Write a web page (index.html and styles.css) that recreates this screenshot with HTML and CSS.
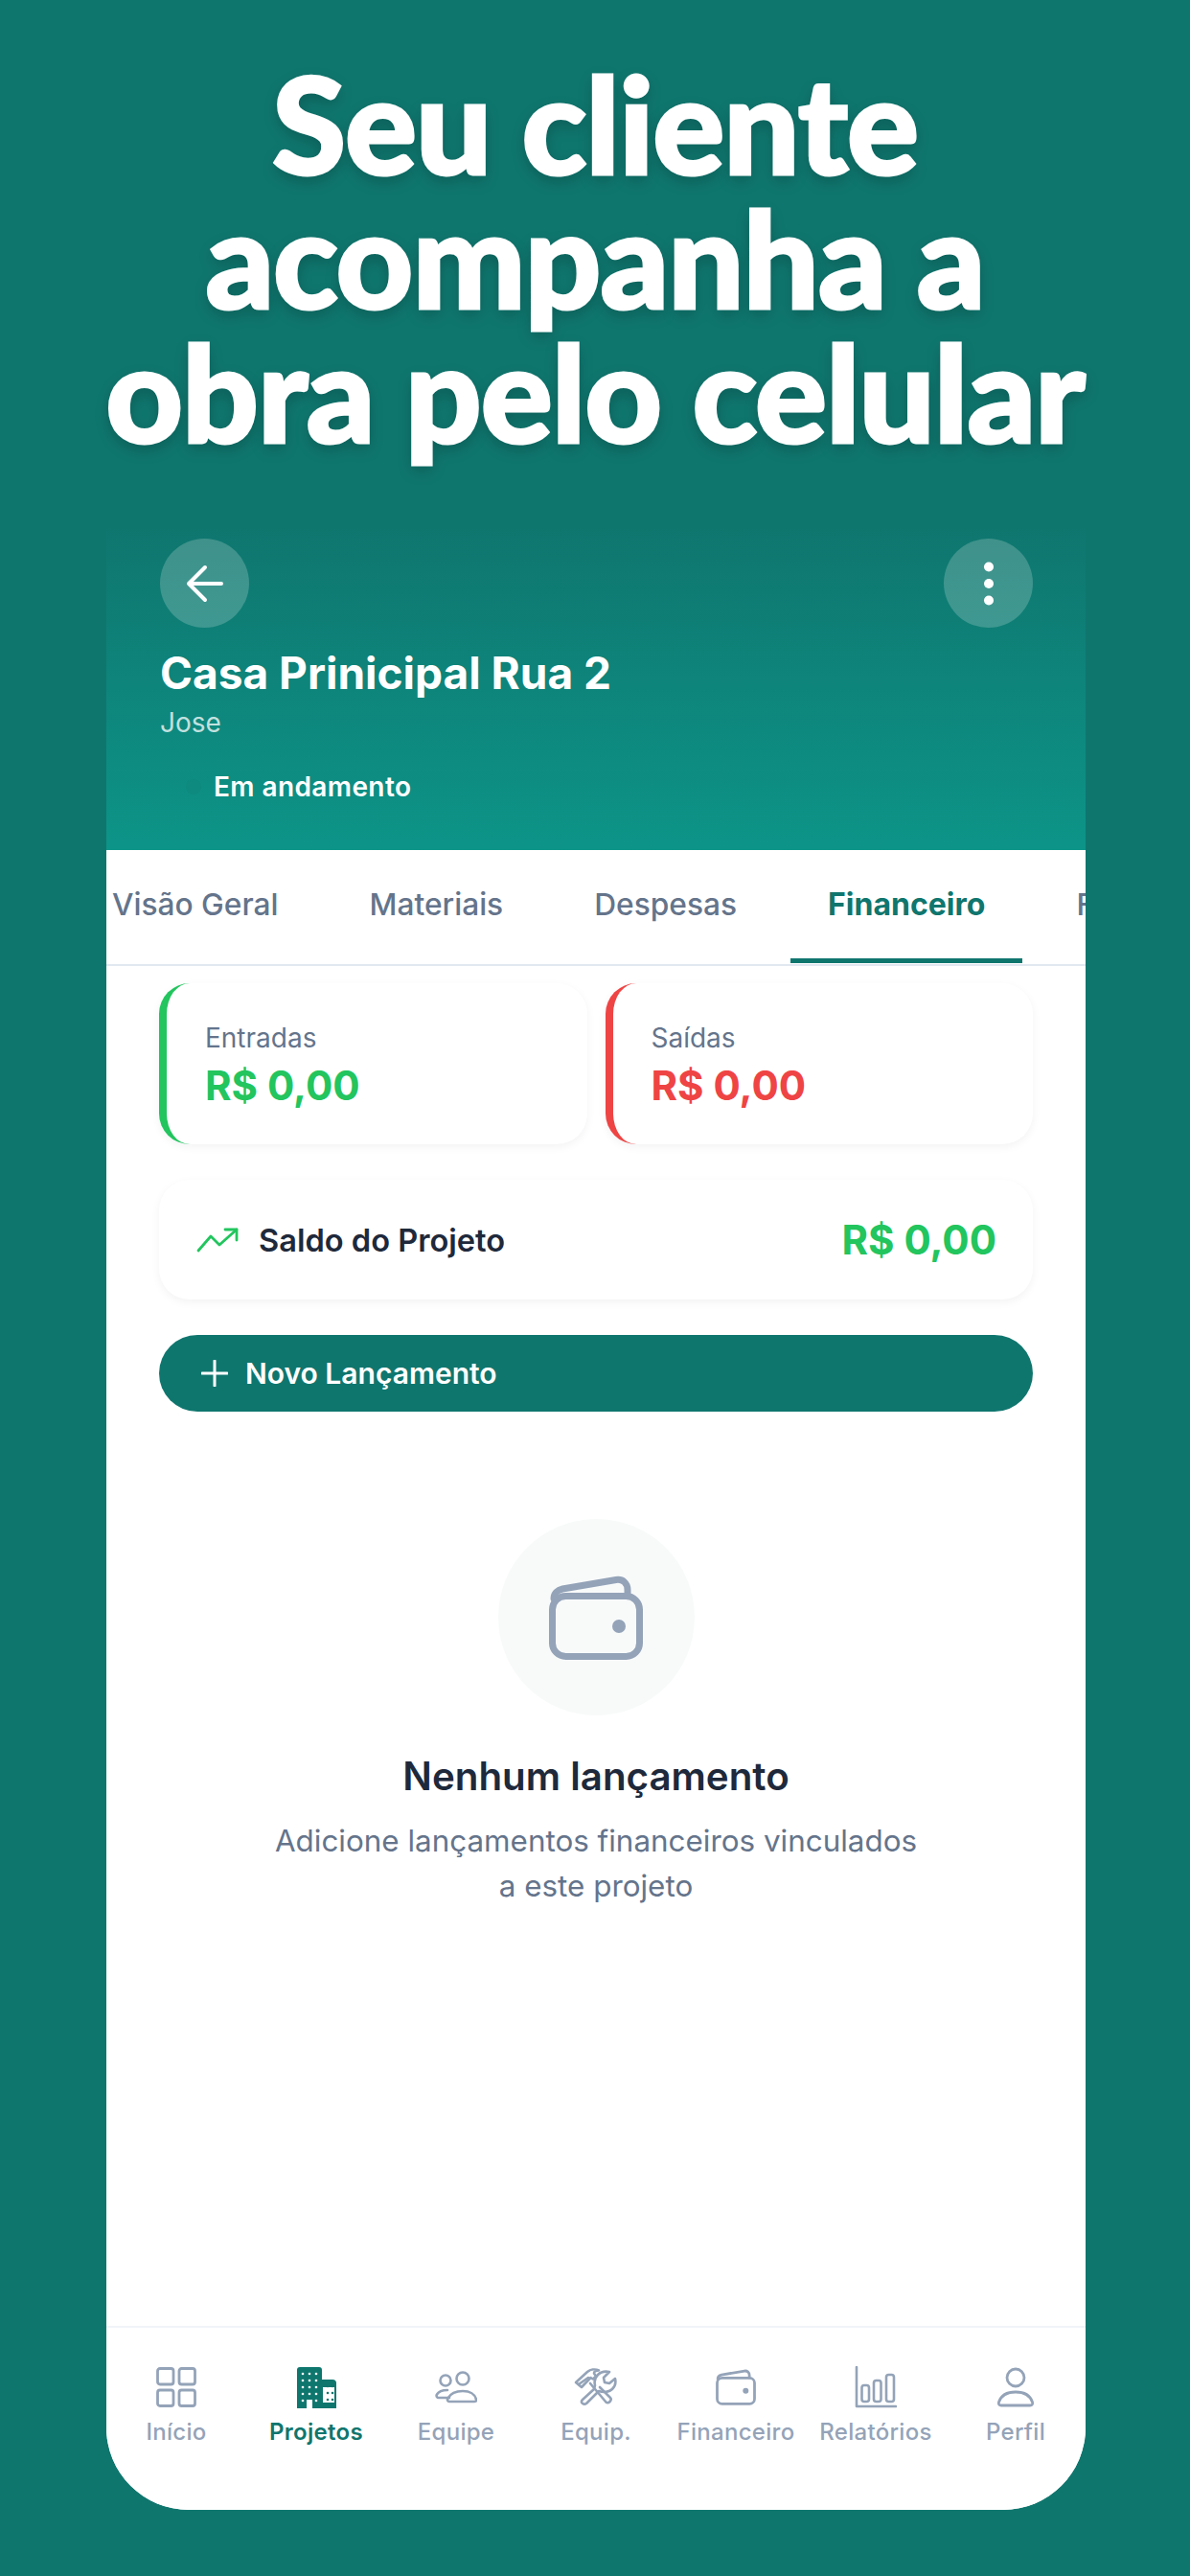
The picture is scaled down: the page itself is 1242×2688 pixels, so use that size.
FILE: index.html
```html
<!DOCTYPE html>
<html lang="pt-BR">
<head>
<meta charset="utf-8">
<title>Seu cliente acompanha a obra pelo celular</title>
<link rel="stylesheet" href="styles.css">
</head>
<body>
<h1 class="headline">Seu cliente<br>acompanha a<br>obra pelo celular</h1>
<main class="phone">
  <header class="hero">
    <div class="hero-actions">
      <button class="round-btn" aria-label="Voltar">
        <svg width="40" height="40" viewBox="0 0 40 40" fill="none" stroke="#fff" stroke-width="4" stroke-linecap="round" stroke-linejoin="round"><path d="M37 20H3M20 3 3 20l17 17"/></svg>
      </button>
      <button class="round-btn" aria-label="Mais">
        <svg width="12" height="46" viewBox="0 0 12 46" fill="#fff"><circle cx="6" cy="5.500" r="5"/><circle cx="6" cy="23" r="5"/><circle cx="6" cy="40.500" r="5"/></svg>
      </button>
    </div>
    <div class="hero-title">Casa Prinicipal Rua 2</div>
    <div class="hero-client">Jose</div>
    <div class="hero-status"><span class="status-dot"></span>Em andamento</div>
  </header>
  <nav class="tabs">
    <span class="tab">Visão Geral</span>
    <span class="tab">Materiais</span>
    <span class="tab">Despesas</span>
    <span class="tab tab-active">Financeiro</span>
    <span class="tab">Fotos</span>
  </nav>
  <section class="content">
    <div class="summary">
      <div class="card card-in"><div class="card-label">Entradas</div><div class="money money-in">R$ 0,00</div></div>
      <div class="card card-out"><div class="card-label">Saídas</div><div class="money money-out">R$ 0,00</div></div>
    </div>
    <div class="balance">
      <svg width="44" height="26" viewBox="0 0 44 26" fill="none" stroke="#22c55e" stroke-width="2.800" stroke-linecap="round" stroke-linejoin="round"><path d="M2 24 15 9l9 9L42 2"/><path d="M30 2h12v11"/></svg>
      <span class="balance-label">Saldo do Projeto</span>
      <span class="money money-in">R$ 0,00</span>
    </div>
    <button class="add-btn">
      <svg width="28" height="28" viewBox="0 0 28 28" fill="none" stroke="#fff" stroke-width="3" stroke-linecap="round"><path d="M14 1v26M1 14h26"/></svg>
      Novo Lançamento
    </button>
    <div class="empty">
      <div class="empty-circle">
        <svg width="98" height="88" viewBox="0 0 98 88" fill="none" stroke="#94a3b8" stroke-width="7" stroke-linecap="round" stroke-linejoin="round"><rect x="3.500" y="21.500" width="91" height="63" rx="14"/><path d="M5 24c0-5 4-9 9-10L70 4.500C77 3.500 82 8 82 15v6"/><circle cx="73" cy="53" r="7" fill="#94a3b8" stroke="none"/></svg>
      </div>
      <h2 class="empty-title">Nenhum lançamento</h2>
      <p class="empty-text">Adicione lançamentos financeiros vinculados<br>a este projeto</p>
    </div>
  </section>
  <nav class="bottom-nav">
    <div class="nav-item">
      <svg class="nav-icon" width="42" height="42" viewBox="0 0 42 42" fill="none" stroke="#94a3b8" stroke-width="2.800"><rect x="1.500" y="1.500" width="16.500" height="16.500" rx="2.500"/><rect x="24" y="1.500" width="16.500" height="16.500" rx="2.500"/><rect x="1.500" y="24" width="16.500" height="16.500" rx="2.500"/><rect x="24" y="24" width="16.500" height="16.500" rx="2.500"/></svg>
      <span>Início</span>
    </div>
    <div class="nav-item nav-active">
      <svg class="nav-icon" width="42" height="44" viewBox="0 0 42 44" fill="#0f766e"><path d="M1 4a3 3 0 0 1 3-3h20a3 3 0 0 1 3 3v40H17V35h-6v9H1z"/><path d="M27 16h11a3 3 0 0 1 3 3v25H27z" fill="#fff" stroke="#0f766e" stroke-width="2"/><path d="M27 14h11a4 4 0 0 1 4 4v4H27zM27 38h15v6H27z"/><g fill="#fff"><circle cx="7" cy="8" r="1.300"/><circle cx="14" cy="8" r="1.300"/><circle cx="21" cy="8" r="1.300"/><circle cx="7" cy="15" r="1.300"/><circle cx="14" cy="15" r="1.300"/><circle cx="21" cy="15" r="1.300"/><circle cx="7" cy="22" r="1.300"/><circle cx="14" cy="22" r="1.300"/><circle cx="21" cy="22" r="1.300"/><circle cx="7" cy="29" r="1.300"/><circle cx="14" cy="29" r="1.300"/><circle cx="21" cy="29" r="1.300"/><circle cx="7" cy="36" r="1.300"/><circle cx="21" cy="36" r="1.300"/></g><g><circle cx="33" cy="21" r="1.300"/><circle cx="33" cy="28" r="1.300"/><circle cx="33" cy="35" r="1.300"/><circle cx="38" cy="21" r="1.300"/><circle cx="38" cy="28" r="1.300"/><circle cx="38" cy="35" r="1.300"/></g></svg>
      <span>Projetos</span>
    </div>
    <div class="nav-item">
      <svg class="nav-icon" width="44" height="34" viewBox="0 0 44 34" fill="none" stroke="#94a3b8" stroke-width="2.600" stroke-linecap="round" stroke-linejoin="round"><circle cx="11" cy="10" r="5.500"/><circle cx="29" cy="8" r="6.500"/><path d="M15 28H4c-2 0-3-2-2-3.500C4 21 8 20 13 20"/><path d="M15 32c-2 0-2.500-2-1.500-3.500C16 24 22 21 29 21s13 3 14 9c.3 1.500-.5 2-2 2z"/></svg>
      <span>Equipe</span>
    </div>
    <div class="nav-item">
      <svg class="nav-icon" width="46" height="40" viewBox="0 0 46 40" fill="none" stroke="#94a3b8" stroke-width="2.600" stroke-linejoin="round" stroke-linecap="round"><path d="M2 15 14 4c3-2.500 8-3.500 12-1.500-3 0-5 1-5 3l2 3-3 3-2.500-1.500L8 20z"/><path d="M15 10 5 17"/><path d="M17 16 33 35c1 1.500 3 1.500 4 .5l1-1c1-1.500 1-2.500 0-3.500L27 20"/><path d="M21 22 9 33c-1.500 1.500-1.500 3 0 4s2.500 1 4 0l13-13c5 2 11 1 14-2s4-7 3-11l-6 5-5-1-1-5 6-6c-5-1-9 0-12 3s-4 7-3 11z"/></svg>
      <span>Equip.</span>
    </div>
    <div class="nav-item">
      <svg class="nav-icon" width="42" height="38" viewBox="0 0 98 88" fill="none" stroke="#94a3b8" stroke-width="6.500" stroke-linecap="round" stroke-linejoin="round"><rect x="3.500" y="21.500" width="91" height="63" rx="12"/><path d="M5 24c0-5 4-9 9-10L70 4.500C77 3.500 82 8 82 15v6"/><circle cx="73" cy="53" r="7" fill="#94a3b8" stroke="none"/></svg>
      <span>Financeiro</span>
    </div>
    <div class="nav-item">
      <svg class="nav-icon" width="44" height="44" viewBox="0 0 44 44" fill="none" stroke="#94a3b8" stroke-width="2.600" stroke-linecap="round" stroke-linejoin="round"><path d="M2 1v41h41"/><rect x="7.500" y="20" width="7.500" height="17" rx="2.500"/><rect x="20" y="15" width="7.500" height="22" rx="2.500"/><rect x="33" y="9" width="8" height="28" rx="2.500"/></svg>
      <span>Relatórios</span>
    </div>
    <div class="nav-item">
      <svg class="nav-icon" width="40" height="42" viewBox="0 0 40 42" fill="none" stroke="#94a3b8" stroke-width="2.800" stroke-linejoin="round"><circle cx="20" cy="11" r="9"/><path d="M5 40c-2 0-3.300-1-2.500-3.500C5 29 12 26 20 26s15 3 17.500 10.500c.8 2.500-.5 3.500-2.500 3.500z"/></svg>
      <span>Perfil</span>
    </div>
  </nav>
</main>
</body>
</html>
```
FILE: styles.css
```css
* { box-sizing: border-box; }
html, body { margin: 0; padding: 0; }
body {
  width: 1242px;
  height: 2688px;
  background: #0f766e;
  font-family: Inter, "Liberation Sans", sans-serif;
  overflow: hidden;
}
.headline {
  margin: 0;
  height: 550px;
  padding-top: 58px;
  font-family: Lato, "Liberation Sans", sans-serif;
  font-weight: 900;
  font-size: 140px;
  line-height: 140px;
  letter-spacing: -1px;
  color: #fff;
  -webkit-text-stroke: 3px #fff;
  text-align: center;
  text-shadow: 0 6px 16px rgba(0, 0, 0, .22);
}
.phone {
  width: 1022px;
  height: 2069px;
  margin-left: 111px;
  background: #fff;
  border-radius: 0 0 86px 86px;
  display: flex;
  flex-direction: column;
  overflow: hidden;
}
.hero {
  height: 337px;
  padding: 12px 55px 0 56px;
  background: linear-gradient(180deg, #0f766e 0%, #0d9488 100%);
  color: #fff;
}
.hero-actions { display: flex; justify-content: space-between; }
.round-btn {
  width: 93px;
  height: 93px;
  padding: 0;
  border: 0;
  border-radius: 50%;
  background: rgba(255, 255, 255, .2);
  display: flex;
  align-items: center;
  justify-content: center;
}
.hero-title {
  margin-top: 19px;
  font-size: 46px;
  line-height: 56px;
  font-weight: 700;
}
.hero-client {
  margin-top: 6px;
  font-size: 28px;
  line-height: 36px;
  color: rgba(255, 255, 255, .75);
}
.hero-status {
  margin-top: 31px;
  padding-left: 27px;
  display: flex;
  align-items: center;
  gap: 13px;
  font-size: 28px;
  line-height: 36px;
  font-weight: 600;
  letter-spacing: .4px;
}
.status-dot {
  width: 16px;
  height: 16px;
  border-radius: 50%;
  background: #0e8a7e;
}
.tabs {
  height: 121px;
  flex: none;
  display: flex;
  gap: 17px;
  overflow: hidden;
  border-bottom: 2px solid #e2e8f0;
}
.tab {
  flex: none;
  padding: 0 39px;
  line-height: 113px;
  height: 119px;
  font-size: 31.700px;
  font-weight: 500;
  color: #64748b;
}
.tab:first-child { margin-left: -33px; }
.tab-active {
  color: #0f766e;
  font-size: 32px;
  font-weight: 700;
  border-bottom: 5px solid #0f766e;
  height: 118px;
}
.content {
  flex: 1;
  padding: 18px 55px 0;
}
.summary { display: flex; gap: 19px; }
.card {
  flex: 1;
  height: 168px;
  padding: 39px 0 0 40px;
  border-radius: 32px;
  background: #fff;
  box-shadow: 0 3px 10px rgba(15, 23, 42, .05);
}
.card-in { border-left: 8px solid #22c55e; }
.card-out { border-left: 8px solid #ef4444; }
.card-label {
  font-size: 28px;
  line-height: 36px;
  color: #64748b;
}
.money {
  font-size: 42px;
  line-height: 52px;
  font-weight: 700;
}
.card .money { margin-top: 6px; }
.money-in { color: #22c55e; }
.money-out { color: #ef4444; }
.balance {
  height: 125px;
  margin-top: 37px;
  padding: 0 38px 0 39px;
  display: flex;
  align-items: center;
  gap: 21px;
  border-radius: 32px;
  background: #fff;
  box-shadow: 0 3px 10px rgba(15, 23, 42, .05);
}
.balance-label {
  flex: 1;
  font-size: 32.600px;
  font-weight: 600;
  color: #1e293b;
}
.add-btn {
  width: 100%;
  height: 80px;
  margin-top: 37px;
  padding: 0 0 0 44px;
  border: 0;
  border-radius: 40px;
  background: #0f766e;
  color: #fff;
  display: flex;
  align-items: center;
  gap: 18px;
  font-family: inherit;
  font-size: 30px;
  font-weight: 600;
}
.empty {
  margin-top: 112px;
  display: flex;
  flex-direction: column;
  align-items: center;
}
.empty-circle {
  width: 205px;
  height: 205px;
  border-radius: 50%;
  background: #f8fafa;
  display: flex;
  align-items: center;
  justify-content: center;
}
.empty-title {
  margin: 37px 0 0;
  font-size: 40.300px;
  line-height: 54px;
  font-weight: 600;
  color: #1e293b;
}
.empty-text {
  margin: 17px 0 0;
  font-size: 31.400px;
  line-height: 47px;
  color: #64748b;
  text-align: center;
}
.bottom-nav {
  height: 192px;
  flex: none;
  display: grid;
  grid-template-columns: repeat(7, 1fr);
  border-top: 2px solid #f1f5f9;
  background: #fff;
  padding-top: 40px;
}
.nav-item {
  display: flex;
  flex-direction: column;
  align-items: center;
  font-size: 24px;
  line-height: 30px;
  font-weight: 500;
  letter-spacing: .3px;
  color: #94a3b8;
  white-space: nowrap;
}
.nav-icon { height: 44px; margin-bottom: 10px; }
.nav-active { color: #0f766e; font-weight: 600; }
```
